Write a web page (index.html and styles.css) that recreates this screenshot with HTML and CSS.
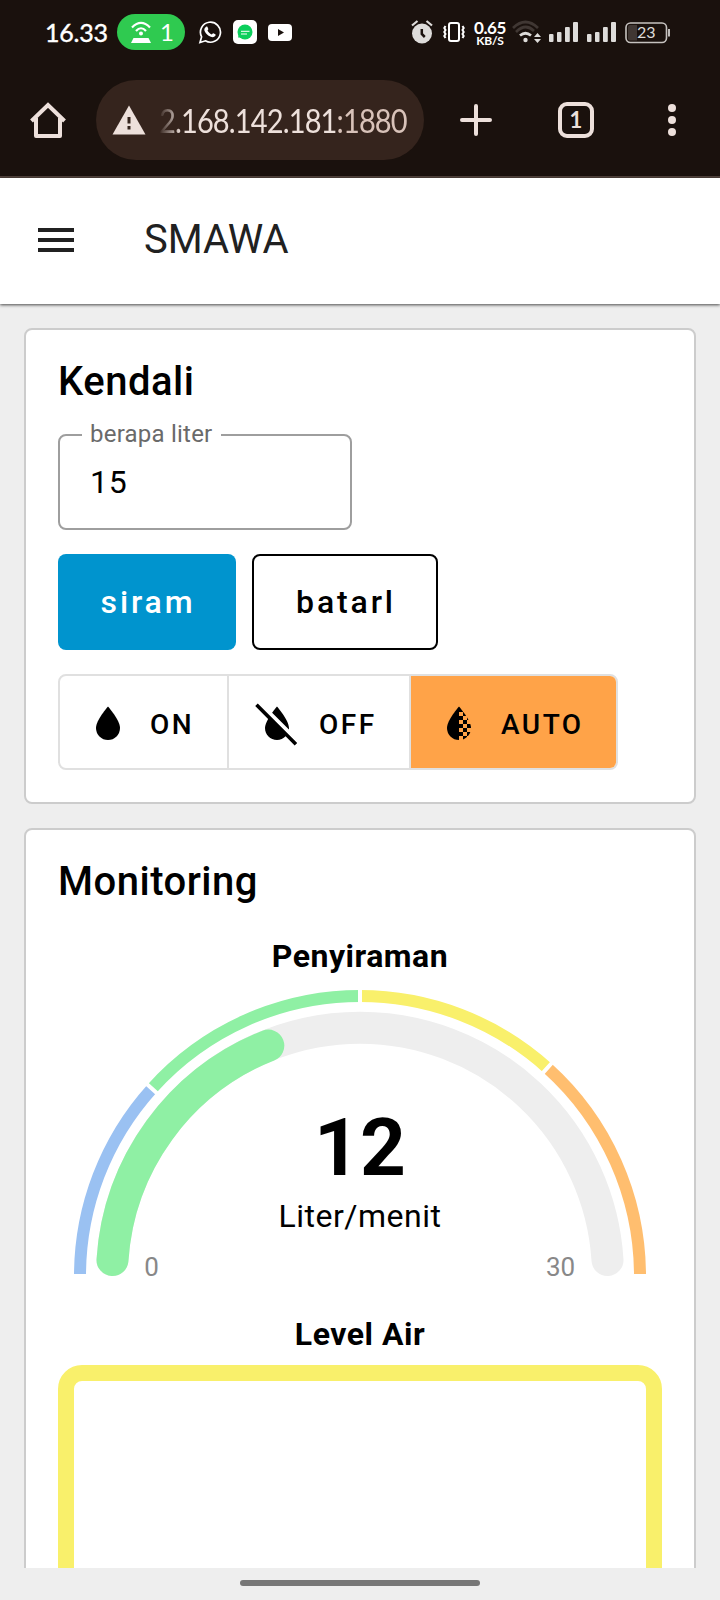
FILE: index.html
```html
<!DOCTYPE html>
<html lang="id">
<head>
<meta charset="utf-8">
<title>SMAWA</title>
<link rel="stylesheet" href="styles.css">
</head>
<body>
<div class="screen">
  <div class="status-bar">
    <span class="clock">16.33</span>
    <span class="hotspot">
      <svg width="22" height="24" viewBox="0 0 22 24" fill="none" stroke="#fff" stroke-width="2.200"><path d="M2 7.500Q11-1.500 20 7.500M6 11Q11 5.500 16 11"/><circle cx="11" cy="13.500" r="2" fill="#fff" stroke="none"/><path d="M3.500 18h15l2.500 5H1z" fill="#fff" stroke="none"/></svg>
      <span class="hotspot-count">1</span>
    </span>
    <svg class="ic-wa" width="24" height="24" viewBox="0 0 24 24"><path d="M2 22.500l1.600-5.700A10 10 0 1 1 7.400 20.800z" fill="none" stroke="#fff" stroke-width="1.700"/><path d="M8.100 6.700c.5-.3 1.200-.2 1.400.3l.8 1.900c.2.500-.7 1.200-.8 1.600 1 1.900 2.200 3.100 4.200 4 .5 0 1.100-1.400 1.600-1.200l2 1c.5.300.3 1.300-.1 1.800-1.500 1.700-4 1.200-6.600-.4-2.100-1.300-3.700-3.400-4.200-5.100-.4-1.500.6-3.300 1.700-3.900z" fill="#fff"/></svg>
    <svg class="ic-chat" width="24" height="24" viewBox="0 0 24 24"><rect width="24" height="24" rx="5" fill="#fff"/><circle cx="12" cy="12" r="7.500" fill="#0bcf5c"/><path d="M5 17.500h4l-3-4z" fill="#0bcf5c"/><path d="M8 11.300h8.500M8 14h6" stroke="#fff" stroke-width="1"/></svg>
    <svg class="ic-video" width="24" height="17" viewBox="0 0 24 17"><rect width="24" height="17" rx="4" fill="#fff"/><path d="M10 5l6 3.500-6 3.500z" fill="#1a110d"/></svg>
    <span class="spacer"></span>
    <svg class="ic-alarm" width="22" height="24" viewBox="0 0 22 24"><circle cx="11" cy="13.500" r="10" fill="#dedcda"/><path d="M1 5.500L6.500 1M21 5.500L15.500 1" stroke="#dedcda" stroke-width="2.200"/><path d="M10.800 9v5l3 3" fill="none" stroke="#1a110d" stroke-width="2.500"/></svg>
    <svg class="ic-vib" width="22" height="20" viewBox="0 0 22 20" fill="none" stroke="#fff"><rect x="6" y="1" width="10" height="18" rx="2" stroke-width="2"/><path d="M2.500 4l-1.200 2 1.200 2-1.200 2 1.200 2-1.200 2 1.200 2M19.500 4l1.200 2-1.200 2 1.200 2-1.200 2 1.200 2-1.200 2" stroke-width="2"/></svg>
    <span class="speed"><span class="speed-value">0.65</span><span class="speed-unit">KB/S</span></span>
    <svg class="ic-wifi" width="30" height="24" viewBox="0 0 30 24" fill="none" stroke-width="2.700"><path d="M1 8Q13.500-4 26 8M4 12Q13.500 2.500 22 11" stroke="#403733"/><path d="M8 15.500Q13.500 11 19 15.500" stroke="#dedcda"/><circle cx="13.500" cy="20" r="2.200" fill="#dedcda"/><path d="M22 17l3.500-4 3.500 4zM22 19l3.500 4 3.500-4z" fill="#dedcda"/></svg>
    <svg class="ic-sig" width="29" height="20" viewBox="0 0 29 20" fill="#dedcda"><rect y="12" width="4.500" height="8" rx="1"/><rect x="8" y="10" width="4.500" height="10" rx="1"/><rect x="16" y="5" width="4.800" height="15" rx="1"/><rect x="24" width="5" height="20" rx="1"/></svg>
    <svg class="ic-sig2" width="29" height="20" viewBox="0 0 29 20" fill="#dedcda"><rect y="12" width="4.500" height="8" rx="1"/><rect x="8" y="10" width="4.500" height="10" rx="1"/><rect x="16" y="5" width="4.800" height="15" rx="1"/><rect x="24" width="5" height="20" rx="1"/></svg>
    <svg class="ic-batt" width="46" height="22" viewBox="0 0 46 22"><rect x="1" y="1" width="40.500" height="19.500" rx="4.500" fill="none" stroke="#c6c2bf" stroke-width="1.600"/><path d="M5 3h7v15.500H5a2 2 0 0 1-2-2V5a2 2 0 0 1 2-2z" fill="#403733"/><path d="M44 7v7.500" stroke="#dedcda" stroke-width="1.700"/><text class="batt-text" x="12" y="16">23</text></svg>
  </div>

  <div class="browser-bar">
    <svg width="36" height="36" viewBox="0 0 36 36" fill="none" stroke="#ede0db" stroke-width="4" stroke-linejoin="round"><path d="M6 16v18h24V16"/><path d="M1.500 19L18 3l16.500 16" stroke-linejoin="miter"/></svg>
    <div class="omnibox">
      <svg width="34" height="30" viewBox="0 0 34 30"><path d="M17 .500L33.500 29.500H.500z" fill="#ede0db"/><path d="M17 12v6.500M17 21v3.500" stroke="#35241d" stroke-width="3"/></svg>
      <div class="url"><div class="url-text">2.168.142.181<span class="port">:1880</span></div></div>
    </div>
    <svg class="ic-plus" width="32" height="32" viewBox="0 0 32 32" stroke="#ede0db" stroke-width="4" stroke-linecap="round"><path d="M16 2v28M2 16h28"/></svg>
    <div class="tabs">1</div>
    <svg class="ic-dots" width="8" height="32" viewBox="0 0 8 32" fill="#ede0db"><circle cx="4" cy="4" r="4"/><circle cx="4" cy="16" r="4"/><circle cx="4" cy="28" r="4"/></svg>
  </div>

  <header class="app-bar">
    <svg width="36" height="24" viewBox="0 0 36 24" fill="#212121"><path d="M0 0h36v4H0zM0 10h36v4H0zM0 20h36v4H0z"/></svg>
    <div class="app-title">SMAWA</div>
  </header>

  <main class="content">
    <section class="card">
      <h2 class="card-title">Kendali</h2>
      <fieldset class="field">
        <legend class="field-label">berapa liter</legend>
        <div class="field-value">15</div>
      </fieldset>
      <div class="buttons">
        <button class="btn btn-primary">siram</button>
        <button class="btn btn-outline">batarl</button>
      </div>
      <div class="toggle">
        <div class="toggle-item toggle-on">
          <svg width="48" height="48" viewBox="0 0 24 24"><path d="M12 20A6 6 0 0 1 6 14C6 10 12 3.250 12 3.250S18 10 18 14A6 6 0 0 1 12 20Z"/></svg>
          <span>ON</span>
        </div>
        <div class="toggle-item toggle-off">
          <svg width="48" height="48" viewBox="0 0 24 24"><path d="M20.840 22.730L16.290 18.180C15.200 19.300 13.690 20 12 20C8.690 20 6 17.310 6 14C6 12.670 6.670 11.030 7.550 9.440L1.110 3L2.390 1.730L22.110 21.460L20.840 22.730M18 14C18 10 12 3.250 12 3.250S10.840 4.550 9.550 6.350L17.950 14.750C18 14.500 18 14.250 18 14Z"/></svg>
          <span>OFF</span>
        </div>
        <div class="toggle-item toggle-auto">
          <svg width="48" height="48" viewBox="0 0 24 24"><defs><clipPath id="drop"><path d="M12 20A6 6 0 0 1 6 14C6 10 12 3.250 12 3.250S18 10 18 14A6 6 0 0 1 12 20Z"/></clipPath></defs><path clip-path="url(#drop)" d="M5 2h7v18H5zM12 2h2v4h-2zM14 6h2v2h-2zM12 8h2v2h-2zM16 8h2v2h-2zM14 10h2v2h-2zM12 12h2v2h-2zM16 12h2v2h-2zM14 14h2v2h-2zM12 16h2v2h-2zM16 16h2v2h-2zM14 18h2v2h-2z"/></svg>
          <span>AUTO</span>
        </div>
      </div>
    </section>

    <section class="card card-monitor">
      <h2 class="card-title">Monitoring</h2>
      <h3 class="widget-title">Penyiraman</h3>
      <svg class="gauge" width="604" height="300" viewBox="58 988 604 300">
        <g fill="none" stroke-width="12">
          <path stroke="#9ac1f2" d="M80 1276A280 280 0 0 1 151.920 1088.640"/>
          <path stroke="#8ff0a4" d="M151.920 1088.640A280 280 0 0 1 360 996"/>
          <path stroke="#f9f06b" d="M360 996A280 280 0 0 1 547.360 1067.920"/>
          <path stroke="#ffbe6f" d="M547.360 1067.920A280 280 0 0 1 640 1276"/>
        </g>
        <path d="M360 985V1006M141.510 1079.280L160.090 1096M556.720 1057.510L540 1076.090M70 1276H92M628 1276H650" stroke="#fff" stroke-width="4"/>
        <g fill="none" stroke-width="32" stroke-linecap="round">
          <path stroke="#eee" d="M112.500 1260A248 248 0 0 1 607.500 1260"/>
          <path stroke="#8ff0a4" d="M112.500 1260A248 248 0 0 1 268.300 1045.600"/>
        </g>
        <text class="gauge-value" x="360" y="1175">12</text>
        <text class="gauge-unit" x="360" y="1227">Liter/menit</text>
        <text class="gauge-limit" x="151.500" y="1275.500">0</text>
        <text class="gauge-limit" x="560.500" y="1275.500">30</text>
      </svg>
      <h3 class="widget-title tank-title">Level Air</h3>
      <div class="tank"></div>
    </section>
  </main>
  <div class="nav-bar"><div class="nav-handle"></div></div>
</div>
</body>
</html>
```
FILE: styles.css
```css
* { box-sizing: border-box; }
body { margin: 0; font-family: Roboto, sans-serif; background: #eee; color: #000; }
svg { display: block; flex: none; }
.screen { width: 720px; height: 1600px; display: flex; flex-direction: column; overflow: hidden; }

.status-bar { height: 64px; flex: none; background: #1a110d; display: flex; align-items: center; padding-left: 45px; padding-right: 49px; font-family: Lato, sans-serif; color: #fff; }
.clock { width: 72px; font-size: 25px; font-weight: 400; letter-spacing: -0.2px; white-space: nowrap; -webkit-text-stroke: 0.4px #fff; }
.hotspot { width: 68px; height: 36px; border-radius: 18px; background: #2fca50; display: flex; align-items: center; padding-left: 13px; gap: 8px; }
.hotspot-count { font-size: 24px; line-height: 30px; }
.ic-wa { margin-left: 13px; }
.ic-chat { margin-left: 11px; }
.ic-video { margin-left: 11px; margin-top: 1px; }
.spacer { flex: 1; }
.ic-vib { margin-left: 10px; }
.speed { width: 34px; margin-left: 8px; display: flex; flex-direction: column; align-items: center; font-weight: 700; margin-top: 2px; }
.speed-value { font-size: 17px; line-height: 15px; letter-spacing: -0.4px; }
.speed-unit { font-size: 12px; line-height: 12px; letter-spacing: -0.2px; }
.ic-wifi { margin-left: 5px; }
.ic-sig { margin-left: 7px; }
.ic-sig2 { margin-left: 9px; }
.ic-batt { margin-left: 9px; margin-top: 1px; }
.batt-text { font: 16px Lato, sans-serif; fill: #dedcda; }

.browser-bar { height: 114px; flex: none; background: #1a110d; border-bottom: 2px solid #50423c; display: flex; align-items: center; padding-left: 30px; color: #ede0db; }
.omnibox { width: 328px; height: 80px; border-radius: 40px; background: #35241d; margin-left: 30px; display: flex; align-items: center; padding-left: 16px; }
.url { width: 252px; margin-left: 13px; -webkit-mask-image: linear-gradient(90deg, transparent 0, #000 22px); }
.url-text { width: 249px; font: 33px/40px Lato, sans-serif; letter-spacing: -1px; white-space: nowrap; transform: scaleX(.88); transform-origin: 0 50%; }
.port { color: #d8c2b9; }
.ic-plus { margin-left: 36px; }
.tabs { width: 36px; height: 36px; margin-left: 66px; border: 4px solid #ede0db; border-radius: 9px; font: 700 22px/28px Lato, sans-serif; text-align: center; }
.ic-dots { margin-left: 74px; }

.app-bar { height: 126px; flex: none; background: #fff; display: flex; align-items: center; padding: 0 0 3px 38px; box-shadow: 0 1px 3px rgba(0,0,0,.7); position: relative; color: #212121; }
.app-title { margin-left: 70px; font-size: 40px; line-height: 48px; }

.content { flex: 1; min-height: 0; overflow: hidden; padding: 24px 24px 0; display: flex; flex-direction: column; gap: 24px; }
.card { flex: none; height: 476px; background: #fff; border: 2px solid #ccc; border-radius: 8px; padding: 27px 32px 32px; }
.card-monitor { height: 900px; }
.card-title { margin: 0; font-size: 40px; line-height: 50px; font-weight: 500; letter-spacing: .5px; }

.field { margin: 14px 0 0; width: 294px; height: 109px; border: 2px solid #9e9e9e; border-radius: 8px; padding: 0 0 0 30px; }
.field-label { margin-left: -8px; padding: 0 9px 2px 8px; font-size: 24px; line-height: 26px; color: #6a6a6a; letter-spacing: .22px; }
.field-value { font-size: 32px; line-height: 50px; letter-spacing: .8px; margin-top: 8px; }

.buttons { display: flex; gap: 16px; margin-top: 24px; }
.btn { height: 96px; border-radius: 8px; font: 500 32px/40px Roboto, sans-serif; letter-spacing: 2.860px; padding: 0 0 0 2px; }
.btn-primary { width: 178px; background: #0094ce; color: #fff; border: 0; }
.btn-outline { width: 186px; background: #fff; color: #000; border: 2px solid #000; }

.toggle { width: 560px; height: 96px; margin-top: 24px; display: flex; border: 2px solid #e0e0e0; border-radius: 8px; overflow: hidden; }
.toggle-item { display: flex; align-items: center; font-size: 28px; font-weight: 500; letter-spacing: 2.500px; }
.toggle-item svg { margin-top: 4px; }
.toggle-item span { margin-left: 18px; margin-top: 4px; }
.toggle-on { width: 169px; border-right: 2px solid #e0e0e0; padding-left: 24px; }
.toggle-off { width: 182px; border-right: 2px solid #e0e0e0; padding-left: 24px; }
.toggle-auto { flex: 1; background: #ffa348; padding-left: 24px; }

.widget-title { margin: 29px 0 0; font-size: 32px; line-height: 40px; font-weight: 700; text-align: center; letter-spacing: .5px; }
.gauge { margin-top: 12px; }
.gauge text { text-anchor: middle; }
.gauge-value { font-size: 80px; font-weight: 700; }
.gauge-unit { font-size: 32px; letter-spacing: .5px; }
.gauge-limit { font-size: 26px; fill: #888; }
.tank-title { margin-top: 26px; }
.tank { height: 420px; margin-top: 11px; border: 16px solid #f9f06b; border-radius: 24px; }

.nav-bar { height: 32px; flex: none; background: #eee; display: flex; justify-content: center; padding-top: 12px; }
.nav-handle { width: 240px; height: 6px; border-radius: 3px; background: #777; }
```
